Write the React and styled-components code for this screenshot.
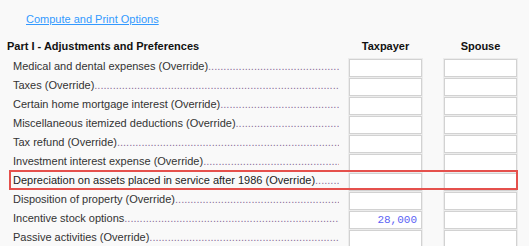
import React from 'react';
import styled, { createGlobalStyle } from 'styled-components';

const GlobalStyle = createGlobalStyle`
  html, body {
    margin: 0;
    padding: 0;
    background: #f9f9f9;
  }
  body {
    font-family: "Liberation Sans", Arial, sans-serif;
    font-size: 11px;
    color: #333;
  }
`;

const Page = styled.div`
  width: 529px;
  height: 246px;
  overflow: hidden;
  padding-left: 7px;
  box-sizing: border-box;
`;

const LinkBar = styled.div`
  height: 38px;
  padding: 12px 0 0 19px;
  box-sizing: border-box;
  line-height: 14px;
`;

const OptionsLink = styled.a`
  color: #3399ff;
  text-decoration: underline;
  cursor: pointer;
`;

const Grid = styled.div`
  display: grid;
  grid-template-columns: 342px 95px 73px;
  align-items: start;
  justify-items: stretch;
`;

const HeaderRow = styled(Grid)`
  height: 21px;
  line-height: 16px;
  font-weight: bold;
  color: #111;
  font-size: 11px;
`;

const ColHead = styled.div`
  width: 73px;
  text-align: center;
`;

const Row = styled(Grid)`
  position: relative;
  height: 19px;
`;

const Label = styled.div`
  display: flex;
  min-width: 0;
  padding: 0 10px 0 6px;
  line-height: 14px;
  white-space: nowrap;
  overflow: hidden;
  color: ${(p) => (p.$strong ? '#222' : '#333')};
`;

const Leader = styled.span`
  flex: 1;
  overflow: hidden;
  color: #8a6f9a;
`;

const Field = styled.div`
  width: 73px;
  height: 18px;
  box-sizing: border-box;
  background: #fff;
  border: 1px solid #d2d2d2;
  box-shadow: 0 0 0 1px #ececec;
  font-family: "Liberation Mono", "Courier New", monospace;
  font-size: 11px;
  color: #5b63f5;
  text-align: right;
  padding: 1px 4px 0 0;
  line-height: 15px;
`;

const Highlight = styled.div`
  position: absolute;
  left: 2px;
  top: -3px;
  width: 505px;
  height: 16px;
  border: 2px solid #e5504c;
  pointer-events: none;
`;

const dots = '.'.repeat(120);

const rows = [
  { label: 'Medical and dental expenses (Override)' },
  { label: 'Taxes (Override)' },
  { label: 'Certain home mortgage interest (Override)' },
  { label: 'Miscellaneous itemized deductions (Override)' },
  { label: 'Tax refund (Override)' },
  { label: 'Investment interest expense (Override)' },
  { label: 'Depreciation on assets placed in service after 1986 (Override)', marked: true },
  { label: 'Disposition of property (Override)' },
  { label: 'Incentive stock options', taxpayer: '28,000' },
  { label: 'Passive activities (Override)' },
];

function App() {
  return (
    <Page>
      <GlobalStyle />
      <LinkBar>
        <OptionsLink>Compute and Print Options</OptionsLink>
      </LinkBar>
      <HeaderRow>
        <div>Part I - Adjustments and Preferences</div>
        <ColHead>Taxpayer</ColHead>
        <ColHead>Spouse</ColHead>
      </HeaderRow>
      {rows.map((row) => (
        <Row key={row.label}>
          <Label $strong={row.marked}>
            <span>{row.label}</span>
            <Leader>{dots}</Leader>
          </Label>
          <Field>{row.taxpayer || ''}</Field>
          <Field />
          {row.marked && <Highlight />}
        </Row>
      ))}
    </Page>
  );
}

export default App;
